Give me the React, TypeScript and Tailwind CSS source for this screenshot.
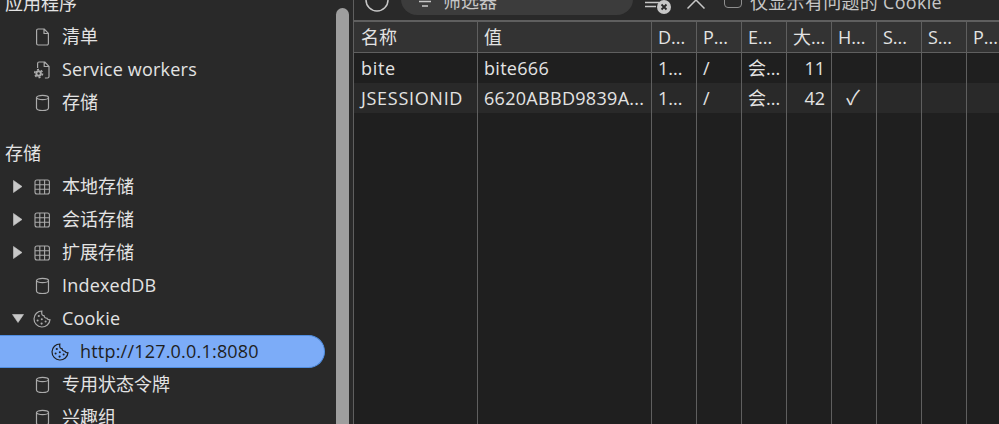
import React from "react";

const ic = "#ababab";

const Doc = () => (
  <svg width="15" height="18" viewBox="0 0 15 18" fill="none" stroke={ic} strokeWidth="1.2" strokeLinejoin="round">
    <path d="M1.6 2.5 a1.5 1.5 0 0 1 1.5-1.5 h6 l4.3 4.3 v10.2 a1.5 1.5 0 0 1 -1.5 1.5 h-8.8 a1.5 1.5 0 0 1 -1.5-1.5 z M9 1 v4.5 h4.4" />
  </svg>
);
const SW = () => (
  <svg width="18" height="18" viewBox="0 0 18 18" fill="none" stroke={ic} strokeWidth="1.2" strokeLinejoin="round">
    <path d="M4.6 7 V2.5 a1.5 1.5 0 0 1 1.5-1.5 h5.6 l4.3 4.3 v10.2 a1.5 1.5 0 0 1 -1.5 1.5 h-2.6 M11.2 1 v4.5 h4.8" />
    <circle cx="5.6" cy="12.5" r="3.2" fill={ic} stroke="none" />
    <circle cx="5.6" cy="12.5" r="3.9" stroke={ic} strokeWidth="1.6" strokeDasharray="2 2.08" />
    <circle cx="5.6" cy="12.5" r="1.2" fill="#292929" stroke="none" />
  </svg>
);
const Db = () => (
  <svg width="15" height="18" viewBox="0 0 15 18" fill="none" stroke={ic} strokeWidth="1.2">
    <ellipse cx="7.5" cy="3.5" rx="6" ry="2.2" />
    <path d="M1.5 3.5 V14 c0 1.4 2.7 2.5 6 2.5 s6-1.1 6-2.5 V3.5" />
  </svg>
);
const Grid = () => (
  <svg width="16" height="16" viewBox="0 0 16 16" fill="none" stroke={ic} strokeWidth="1.1">
    <rect x="1" y="1" width="14.4" height="14" rx="2" />
    <path d="M1 5.7 H15.4 M1 10.3 H15.4 M5.8 1 V15 M10.6 1 V15" />
  </svg>
);
const Cookie = ({ c = ic }: { c?: string }) => (
  <svg width="18" height="18" viewBox="0 0 18 18" fill="none" stroke={c} strokeWidth="1.2" strokeLinejoin="round">
    <path d="M9 1 a8 8 0 1 0 8 8.6 c-1.2 0.4-2.6-0.1-3-1.4 c-1.5 0.2-2.9-0.9-2.9-2.5 c-1.5 0-2.7-1.2-2.3-2.7 c-0.3-0.9-0.2-1.4 0.2-2 z" />
    <g fill={c} stroke="none">
      <circle cx="5.8" cy="6" r="1.1" />
      <circle cx="4.6" cy="10.6" r="1" />
      <circle cx="8.8" cy="9.2" r="1" />
      <circle cx="8.6" cy="13.6" r="1.1" />
      <circle cx="12.6" cy="11.6" r="1" />
    </g>
  </svg>
);
const Right = () => (
  <svg width="9" height="13" viewBox="0 0 9 13"><path d="M0.5 0.5 L9 6.5 L0.5 12.5 z" fill="#c8c8c8" stroke="#c8c8c8" strokeWidth="0.6" strokeLinejoin="round" /></svg>
);
const Down = () => (
  <svg width="12" height="9" viewBox="0 0 12 9"><path d="M0.5 0.5 H11.5 L6 8.5 z" fill="#c8c8c8" stroke="#c8c8c8" strokeWidth="0.6" strokeLinejoin="round" /></svg>
);

function Row({ arrow, icon, latin, children }: { arrow?: React.ReactNode; icon: React.ReactNode; latin?: boolean; children: React.ReactNode }) {
  return (
    <div className="flex h-[33px] shrink-0 items-center">
      <span className="flex w-[33px] shrink-0 justify-center pl-[2px]">{arrow}</span>
      <span className="flex w-[18px] shrink-0 justify-center">{icon}</span>
      <span className={`ml-[11px] whitespace-nowrap ${latin ? "tracking-[0.2px]" : ""}`}>{children}</span>
    </div>
  );
}

type Col = { w: string; h: string; a: string; b: string; align?: string };

const cols: Col[] = [
  { w: "w-[124px]", h: "名称", a: "bite", b: "JSESSIONID", align: "pl-[7px] tracking-[0.7px]" },
  { w: "w-[174px]", h: "值", a: "bite666", b: "6620ABBD9839A...", align: "pl-[6px] tracking-[0.3px]" },
  { w: "w-[45px]", h: "D...", a: "1...", b: "1...", align: "pl-[6px]" },
  { w: "w-[45px]", h: "P...", a: "/", b: "/", align: "pl-[6px]" },
  { w: "w-[45px]", h: "E...", a: "会...", b: "会...", align: "pl-[6px]" },
  { w: "w-[45px]", h: "大...", a: "11", b: "42", align: "justify-end pr-[6px]" },
  { w: "w-[45px]", h: "H...", a: "", b: "✓", align: "justify-center pr-[2px] text-[20px]" },
  { w: "w-[45px]", h: "S...", a: "", b: "", align: "pl-[6px]" },
  { w: "w-[45px]", h: "S...", a: "", b: "", align: "pl-[6px]" },
  { w: "w-[33px]", h: "P...", a: "", b: "", align: "pl-[6px]" },
];

export default function App() {
  return (
    <div
      className="flex h-[424px] w-[999px] overflow-hidden bg-[#292929] text-[18px] text-[#e3e3e3]"
      style={{ fontFamily: '"Open Sans","Noto Sans CJK SC",sans-serif' }}
    >
      <aside className="flex w-[336px] shrink-0 flex-col pr-[11px]">
        <div className="-mt-[13px] flex h-[33px] shrink-0 items-center pl-[5px]">应用程序</div>
        <Row icon={<Doc />}>清单</Row>
        <Row icon={<SW />} latin>Service workers</Row>
        <Row icon={<Db />}>存储</Row>
        <div className="mt-[18px] flex h-[33px] shrink-0 items-center pl-[5px]">存储</div>
        <Row arrow={<Right />} icon={<Grid />}>本地存储</Row>
        <Row arrow={<Right />} icon={<Grid />}>会话存储</Row>
        <Row arrow={<Right />} icon={<Grid />}>扩展存储</Row>
        <Row icon={<Db />} latin>IndexedDB</Row>
        <Row arrow={<Down />} icon={<Cookie />} latin>Cookie</Row>
        <div className="flex h-[33px] shrink-0 items-center rounded-r-full border-y border-r border-[#4f8de0] bg-[#7cacf8] pl-[51px] text-[#1f1f1f]">
          <Cookie c="#1f1f1f" />
          <span className="ml-[11px] tracking-[0.2px]">http://127.0.0.1:8080</span>
        </div>
        <Row icon={<Db />}>专用状态令牌</Row>
        <Row icon={<Db />}>兴趣组</Row>
      </aside>

      <div className="mt-[8px] w-[13px] shrink-0 rounded-t-[7px] bg-[#9e9e9e]" />

      <main className="ml-[4px] flex min-w-0 flex-1 flex-col border-l border-[#5f5f5f] bg-[#1f1f1f]">
        <div className="flex h-[20px] shrink-0 items-end bg-[#292929] text-[#c7c7c7]">
          <svg className="mb-[8px] ml-[11px] shrink-0" width="24" height="24" viewBox="0 0 24 24" fill="none" stroke="#c7c7c7" strokeWidth="1.5"><circle cx="12" cy="12" r="11" /></svg>
          <div className="mb-[5px] ml-[12px] flex h-[30px] w-[232px] shrink-0 items-center rounded-b-[16px] bg-[#3c3c3c] pl-[18px]">
            <svg className="mt-[9px] shrink-0" width="13" height="10" viewBox="0 0 13 10" stroke="#c7c7c7" strokeWidth="1.5"><path d="M0 1.5 H12 M3 6 H9" /></svg>
            <span className="ml-[11px] mt-[3px] whitespace-nowrap">筛选器</span>
          </div>
          <svg className="mb-[6px] ml-[12px] shrink-0" width="26" height="14" viewBox="0 0 26 14"><path d="M0 2.5 H14 M0 6.5 H11" stroke="#c7c7c7" strokeWidth="1.5" /><circle cx="19" cy="7" r="7" fill="#c7c7c7" /><path d="M16.5 4.5 l5 5 M21.5 4.5 l-5 5" stroke="#292929" strokeWidth="1.8" /></svg>
          <svg className="mb-[11px] ml-[16px] shrink-0" width="18" height="10" viewBox="0 0 18 10" fill="none" stroke="#c7c7c7" strokeWidth="1.5"><path d="M0.5 9.5 L9 1 L17.5 9.5" /></svg>
          <span className="mb-[12px] ml-[19px] h-[18px] w-[18px] shrink-0 rounded-[4px] border border-[#8f8f8f]" />
          <span className="mb-[6px] ml-[8px] whitespace-nowrap leading-[24px] tracking-[0.3px]">仅显示有问题的 Cookie</span>
        </div>
        <div className="flex min-h-0 flex-1 flex-col border-t-2 border-[#5f5f5f]">
          <div className="flex h-[31px] shrink-0 border-b border-[#5f5f5f] bg-[#333333]">
            {cols.map((c, i) => (
              <div key={i} className={`${c.w} flex shrink-0 items-center overflow-hidden border-r border-[#5f5f5f] last:border-r-0 ${i === 0 ? "pl-[7px]" : "pl-[6px]"}`}>{c.h}</div>
            ))}
          </div>
          <div className="flex flex-1">
            {cols.map((c, i) => (
              <div key={i} className={`${c.w} flex shrink-0 flex-col border-r border-[#5f5f5f] last:border-r-0`}>
                <div className={`flex h-[30px] items-center whitespace-nowrap ${c.align}`}>{c.a}</div>
                <div className={`flex h-[30px] items-center whitespace-nowrap bg-[#292929] ${c.align}`}>{c.b}</div>
              </div>
            ))}
          </div>
        </div>
      </main>
    </div>
  );
}
